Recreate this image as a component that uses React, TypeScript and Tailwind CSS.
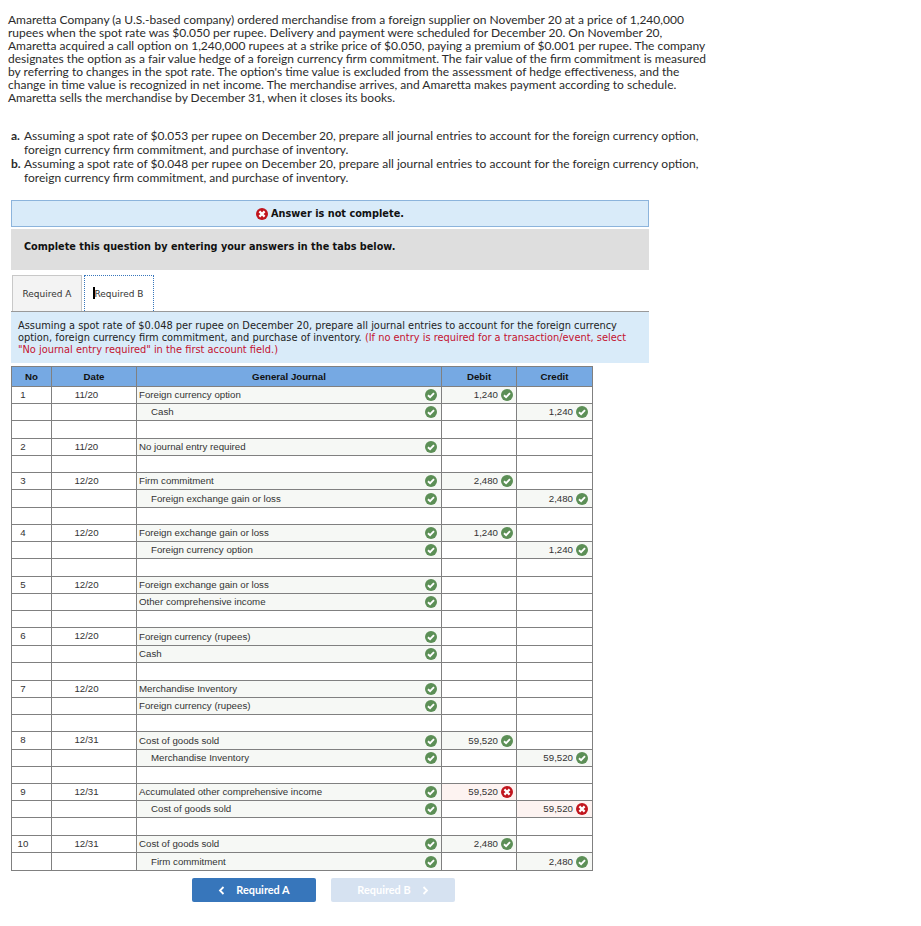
import React from "react";

type Row = { h: 17 | 18; no?: string; date?: string; acct?: string; indent?: boolean; debit?: string; credit?: string; bad?: boolean };

const rows: Row[] = [
  { h: 17, no: "1", date: "11/20", acct: "Foreign currency option", debit: "1,240" },
  { h: 17, acct: "Cash", indent: true, credit: "1,240" },
  { h: 18 },
  { h: 17, no: "2", date: "11/20", acct: "No journal entry required" },
  { h: 17 },
  { h: 17, no: "3", date: "12/20", acct: "Firm commitment", debit: "2,480" },
  { h: 18, acct: "Foreign exchange gain or loss", indent: true, credit: "2,480" },
  { h: 17 },
  { h: 17, no: "4", date: "12/20", acct: "Foreign exchange gain or loss", debit: "1,240" },
  { h: 17, acct: "Foreign currency option", indent: true, credit: "1,240" },
  { h: 18 },
  { h: 17, no: "5", date: "12/20", acct: "Foreign exchange gain or loss" },
  { h: 17, acct: "Other comprehensive income" },
  { h: 17 },
  { h: 18, no: "6", date: "12/20", acct: "Foreign currency (rupees)" },
  { h: 17, acct: "Cash" },
  { h: 18 },
  { h: 17, no: "7", date: "12/20", acct: "Merchandise Inventory" },
  { h: 17, acct: "Foreign currency (rupees)" },
  { h: 17 },
  { h: 18, no: "8", date: "12/31", acct: "Cost of goods sold", debit: "59,520" },
  { h: 17, acct: "Merchandise Inventory", indent: true, credit: "59,520" },
  { h: 17 },
  { h: 17, no: "9", date: "12/31", acct: "Accumulated other comprehensive income", debit: "59,520", bad: true },
  { h: 17, acct: "Cost of goods sold", indent: true, credit: "59,520", bad: true },
  { h: 18 },
  { h: 17, no: "10", date: "12/31", acct: "Cost of goods sold", debit: "2,480" },
  { h: 18, acct: "Firm commitment", indent: true, credit: "2,480" },
];

function Check() {
  return (
    <svg width="12" height="12" viewBox="0 0 12 12" className="shrink-0">
      <circle cx="6" cy="6" r="6" fill="#5c8f56" />
      <path d="M3 6.2 L5.1 8.2 L9 4.2" fill="none" stroke="#fff" strokeWidth="1.9" />
    </svg>
  );
}

function Cross() {
  return (
    <svg width="12" height="12" viewBox="0 0 12 12" className="shrink-0">
      <circle cx="6" cy="6" r="6" fill="#c1151d" />
      <path d="M3.4 3.4 L8.6 8.6 M8.6 3.4 L3.4 8.6" fill="none" stroke="#fff" strokeWidth="2.2" />
    </svg>
  );
}

function Amount({ value, bad, w }: { value?: string; bad?: boolean; w: string }) {
  const bg = !value ? "bg-white" : bad ? "bg-[#fdf3f1]" : "bg-[#f6f8f5]";
  return (
    <div className={`${w} ${bg} border-r border-[#808080] flex items-center justify-end gap-[3px]`}>
      {value && <span className="pt-[1px]">{value}</span>}
      {value && (bad ? <Cross /> : <Check />)}
    </div>
  );
}

function Table() {
  return (
    <div className="w-[582px] ml-[11px] mt-[3px] border-l border-t border-[#808080] font-['Liberation_Sans',sans-serif] text-[9.7px] text-[#333]">
      <div className="flex h-[20px] bg-[#76a9e3] border-b border-[#808080] font-bold text-[#111] text-center items-stretch leading-[19px]">
        <div className="w-[40px] border-r border-[#808080]">No</div>
        <div className="w-[85px] border-r border-[#808080]">Date</div>
        <div className="w-[305px] border-r border-[#808080]">General Journal</div>
        <div className="w-[75px] border-r border-[#808080]">Debit</div>
        <div className="w-[76px] border-r border-[#808080]">Credit</div>
      </div>
      {rows.map((r, i) => (
        <div key={i} className={`flex border-b border-[#808080] ${r.h === 17 ? "h-[17px]" : "h-[18px]"}`}>
          <div className="w-[40px] border-r border-[#808080] pr-[17px] flex items-center justify-center">{r.no}</div>
          <div className="w-[85px] border-r border-[#808080] pr-[15px] flex items-center justify-center">{r.date}</div>
          <div className={`w-[305px] border-r border-[#808080] flex items-center justify-between pr-[4px] ${r.indent ? "pl-[14px]" : "pl-[2px]"} ${r.acct ? "bg-[#f6f8f5]" : "bg-white"}`}>
            <span className="pt-[1px]">{r.acct}</span>
            {r.acct && <Check />}
          </div>
          <Amount value={r.debit} bad={r.bad} w="w-[75px] pr-[3px]" />
          <Amount value={r.credit} bad={r.bad} w="w-[76px] pr-[4px]" />
        </div>
      ))}
    </div>
  );
}

export default function App() {
  return (
    <div className="w-[921px] h-[926px] bg-white overflow-hidden pt-[13px]">
      <p className="ml-[8px] font-['Lato',sans-serif] text-[12px] leading-[13px] text-[#2b2b2b] whitespace-nowrap">
        Amaretta Company (a U.S.-based company) ordered merchandise from a foreign supplier on November 20 at a price of 1,240,000<br />
        rupees when the spot rate was $0.050 per rupee. Delivery and payment were scheduled for December 20. On November 20,<br />
        Amaretta acquired a call option on 1,240,000 rupees at a strike price of $0.050, paying a premium of $0.001 per rupee. The company<br />
        designates the option as a fair value hedge of a foreign currency firm commitment. The fair value of the firm commitment is measured<br />
        by referring to changes in the spot rate. The option's time value is excluded from the assessment of hedge effectiveness, and the<br />
        change in time value is recognized in net income. The merchandise arrives, and Amaretta makes payment according to schedule.<br />
        Amaretta sells the merchandise by December 31, when it closes its books.
      </p>

      <div className="mt-[25px] ml-[11px] font-['Lato',sans-serif] text-[12px] leading-[14px] text-[#2b2b2b] whitespace-nowrap">
        <div className="flex">
          <b className="w-[13px]">a.</b>
          <span>Assuming a spot rate of $0.053 per rupee on December 20, prepare all journal entries to account for the foreign currency option,<br />foreign currency firm commitment, and purchase of inventory.</span>
        </div>
        <div className="flex">
          <b className="w-[13px]">b.</b>
          <span>Assuming a spot rate of $0.048 per rupee on December 20, prepare all journal entries to account for the foreign currency option,<br />foreign currency firm commitment, and purchase of inventory.</span>
        </div>
      </div>

      <div className="mt-[15px] ml-[11px] w-[638px] h-[27px] bg-[#d9ebf9] border border-[#8cb4dc] flex items-center justify-center gap-[3px] font-['DejaVu_Sans',sans-serif] font-bold text-[9.75px] text-[#111]">
        <Cross />
        <span className="pt-[2px]">Answer is not complete.</span>
      </div>

      <div className="mt-[2px] ml-[11px] w-[638px] h-[41px] bg-[#dedede] flex items-start pt-[11px] pl-[13px] font-['DejaVu_Sans',sans-serif] font-bold text-[9.7px] text-[#111]">
        Complete this question by entering your answers in the tabs below.
      </div>

      <div className="mt-[5px] ml-[11px] w-[638px] h-[37px] border-b border-[#999] flex items-end pl-[1px] gap-[2px] font-['DejaVu_Sans',sans-serif] text-[9px] text-[#333]">
        <div className="w-[70px] h-[36px] bg-[#f3f3f3] border border-b-0 border-[#c8c8c8] flex items-center justify-center pt-[2px]">Required A</div>
        <div className="w-[70px] h-[36px] bg-white border border-b-0 border-dotted border-[#3776bb] flex items-center justify-center pt-[2px]">
          <span className="relative">
            <span className="absolute left-[-1px] top-[-1px] w-[2px] h-[12px] bg-black" />
            Required B
          </span>
        </div>
      </div>

      <div className="ml-[11px] w-[638px] h-[51px] bg-[#d9ebf9] pl-[7px] pt-[8px] font-['DejaVu_Sans',sans-serif] text-[9.83px] leading-[12px] text-[#222] whitespace-nowrap">
        Assuming a spot rate of $0.048 per rupee on December 20, prepare all journal entries to account for the foreign currency<br />
        option, foreign currency firm commitment, and purchase of inventory. <span className="text-[#c4122f]">(If no entry is required for a transaction/event, select<br />
        "No journal entry required" in the first account field.)</span>
      </div>

      <Table />

      <div className="mt-[7px] ml-[192px] flex gap-[15px] font-['Lato',sans-serif] font-bold text-[10.9px] text-white">
        <div className="w-[124px] h-[24px] rounded-[2px] bg-[#3776bb] flex items-center justify-center gap-[11px]">
          <svg width="7" height="9" viewBox="0 0 7 9"><path d="M5.5 1 L2 4.5 L5.5 8" fill="none" stroke="#fff" strokeWidth="1.8" /></svg>
          <span>Required A</span>
        </div>
        <div className="w-[124px] h-[24px] rounded-[2px] bg-[#d6e2f1] flex items-center justify-center gap-[11px]">
          <span>Required B</span>
          <svg width="7" height="9" viewBox="0 0 7 9"><path d="M1.5 1 L5 4.5 L1.5 8" fill="none" stroke="#fff" strokeWidth="1.8" /></svg>
        </div>
      </div>
    </div>
  );
}
